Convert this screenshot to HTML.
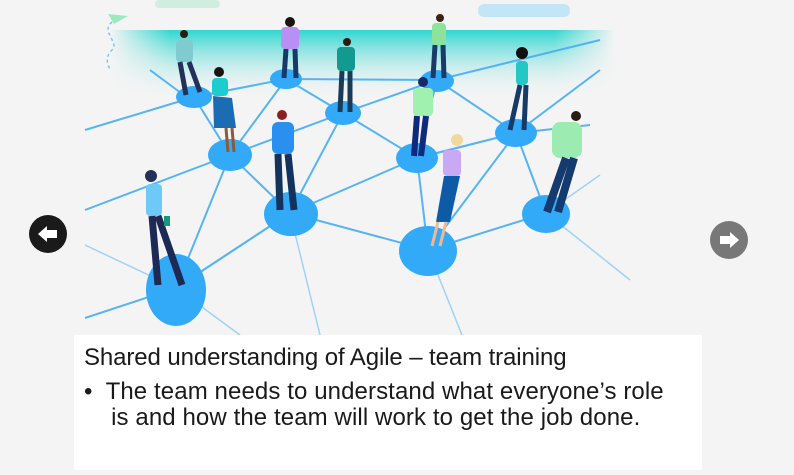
<!DOCTYPE html>
<html><head><meta charset="utf-8"><style>
html,body{margin:0;padding:0;width:794px;height:475px;overflow:hidden;background:#f4f4f4;font-family:"Liberation Sans",sans-serif;}
.box{position:absolute;left:74px;top:335px;width:628px;height:135px;background:#fff;}
.t1{position:absolute;left:10px;top:9px;font-size:24px;color:#1a1a1a;white-space:nowrap;letter-spacing:-0.1px;}
.t2{position:absolute;left:10px;top:44px;font-size:24px;color:#1a1a1a;line-height:26px;white-space:nowrap;letter-spacing:0.1px;}
</style></head><body>
<svg width="794" height="475" style="position:absolute;left:0;top:0">
<defs>
<linearGradient id="tg" x1="0" y1="0" x2="0" y2="1"><stop offset="0" stop-color="#2fd6d0"/><stop offset="1" stop-color="#f4f4f4" stop-opacity="0"/></linearGradient>
<linearGradient id="tgx" x1="0" y1="0" x2="1" y2="0"><stop offset="0" stop-color="#f4f4f4" stop-opacity="1"/><stop offset="0.12" stop-color="#f4f4f4" stop-opacity="0"/><stop offset="0.88" stop-color="#f4f4f4" stop-opacity="0"/><stop offset="1" stop-color="#f4f4f4" stop-opacity="1"/></linearGradient>
</defs>
<rect x="110" y="30" width="505" height="70" fill="url(#tg)"/>
<rect x="110" y="30" width="505" height="70" fill="url(#tgx)"/>
<rect x="155" y="0" width="65" height="8" rx="4" fill="#cfeee0"/>
<rect x="478" y="4" width="92" height="13" rx="6" fill="#c3e6f7"/>
<path d="M108 14 L128 16 L114 24 Z" fill="#9ee8c0"/>
<path d="M112 22 C100 32 120 42 112 50 C104 58 108 64 110 70" stroke="#7cc4ee" stroke-width="1.5" fill="none" stroke-dasharray="3 3"/>
<g stroke="#45aef5" stroke-width="2" fill="none" opacity="0.9">
<path d="M85 130 L194 97 L286 79 L437 80 L600 40"/>
<path d="M85 210 L230 155 L343 113 L437 80"/>
<path d="M194 97 L230 155 L290 213 L176 288"/>
<path d="M286 79 L343 113 L417 158 L516 133 L590 125"/>
<path d="M286 79 L230 155"/>
<path d="M437 80 L516 133 L600 70"/>
<path d="M437 80 L417 158 L428 250 L546 213 L516 133 L417 158"/>
<path d="M343 113 L290 213 L428 250"/>
<path d="M290 213 L417 158"/>
<path d="M230 155 L176 288 L85 318"/>
<path d="M176 288 L290 213"/>
<path d="M428 250 L516 133"/>
<path d="M185 96 L150 70"/>
</g>
<g stroke="#9fd2f7" stroke-width="1.5" fill="none">
<path d="M176 288 L240 335"/><path d="M290 213 L320 335"/><path d="M428 250 L462 335"/>
<path d="M546 213 L630 280"/><path d="M85 245 L176 288"/><path d="M546 213 L600 175"/>
</g>
<g fill="#33aaf8">
<ellipse cx="194" cy="97" rx="18" ry="11"/><ellipse cx="286" cy="79" rx="16" ry="10"/>
<ellipse cx="343" cy="113" rx="18" ry="12"/><ellipse cx="437" cy="81" rx="17" ry="11"/>
<ellipse cx="230" cy="155" rx="22" ry="16"/><ellipse cx="417" cy="158" rx="21" ry="15"/>
<ellipse cx="516" cy="133" rx="21" ry="14"/><ellipse cx="291" cy="214" rx="27" ry="22"/>
<ellipse cx="428" cy="251" rx="29" ry="25"/><ellipse cx="546" cy="214" rx="24" ry="19"/>
<ellipse cx="176" cy="290" rx="30" ry="36"/>
</g>
<g>
<circle cx="184" cy="34" r="4" fill="#2a1a10"/><rect x="176" y="40" width="17" height="22" rx="4" fill="#7fcbd0"/><path d="M180 62 L186 95 M189 62 L200 92" stroke="#23305a" stroke-width="5"/>
<circle cx="290" cy="22" r="5" fill="#1a1210"/><rect x="281" y="27" width="18" height="22" rx="4" fill="#b890f5"/><path d="M286 49 L284 78 M295 49 L296 78" stroke="#163a6a" stroke-width="5"/>
<circle cx="347" cy="42" r="4" fill="#2a1a10"/><rect x="337" y="47" width="18" height="24" rx="4" fill="#129990"/><path d="M342 71 L340 112 M350 71 L350 112" stroke="#1a3a5c" stroke-width="5"/>
<circle cx="440" cy="18" r="4" fill="#3a2410"/><rect x="432" y="23" width="14" height="22" rx="4" fill="#8ee39a"/><path d="M435 45 L433 78 M443 45 L444 78" stroke="#1a3a6a" stroke-width="5"/>
<circle cx="219" cy="72" r="5" fill="#1a1210"/><rect x="212" y="78" width="16" height="18" rx="4" fill="#1ccdd0"/><path d="M213 96 L232 98 L236 128 L214 128 Z" fill="#1c6cb4"/><path d="M226 128 L228 152 M232 128 L234 152" stroke="#8a5a3a" stroke-width="3"/>
<circle cx="522" cy="53" r="6" fill="#111"/><rect x="516" y="61" width="12" height="24" rx="4" fill="#25c6c6"/><path d="M520 85 L510 130 M526 85 L524 130" stroke="#163a6a" stroke-width="5"/>
<circle cx="423" cy="82" r="5" fill="#142a6a"/><rect x="413" y="88" width="20" height="28" rx="4" fill="#a0f0b0"/><path d="M417 116 L414 156 M426 116 L421 156" stroke="#0d2a7c" stroke-width="6"/>
<circle cx="282" cy="115" r="5" fill="#8a2020"/><rect x="272" y="122" width="22" height="32" rx="6" fill="#2b8ff0"/><path d="M278 154 L280 210 M288 154 L294 210" stroke="#13335e" stroke-width="7"/>
<circle cx="576" cy="116" r="5" fill="#2a1a10"/><rect x="552" y="122" width="30" height="36" rx="8" fill="#9cebb0"/><path d="M566 158 L547 212 M574 158 L558 212" stroke="#143a70" stroke-width="8"/>
<circle cx="457" cy="140" r="6" fill="#f0d8a0"/><rect x="443" y="150" width="18" height="26" rx="4" fill="#c9a8f5"/><path d="M444 176 L460 176 L450 222 L436 222 Z" fill="#0d5aa6"/><path d="M438 222 L432 246 M446 222 L440 246" stroke="#f2b890" stroke-width="3"/>
<circle cx="151" cy="176" r="6" fill="#23305a"/><rect x="146" y="184" width="16" height="32" rx="4" fill="#6fc9f6"/><path d="M152 216 L158 285 M158 216 L182 285" stroke="#1c2a55" stroke-width="7"/><rect x="164" y="216" width="6" height="10" fill="#149a7a"/>
</g>
<circle cx="48" cy="234" r="19" fill="#1a1a1a"/>
<path d="M38 234 L47 226 L47 230 L57 230 L57 238 L47 238 L47 242 Z" fill="#fff"/>
<circle cx="729" cy="240" r="19" fill="#787878"/>
<path d="M739 240 L730 232 L730 236 L720 236 L720 244 L730 244 L730 248 Z" fill="#fff"/>
</svg>
<div class="box">
<div class="t1">Shared understanding of Agile – team training</div>
<div class="t2">•&nbsp; The team needs to understand what everyone’s role<br>&nbsp;&nbsp;&nbsp;&nbsp;is and how the team will work to get the job done.</div>
</div>
</body></html>
